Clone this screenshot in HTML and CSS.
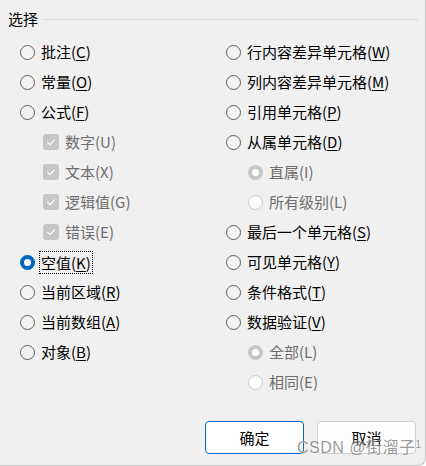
FILE: index.html
```html
<!DOCTYPE html>
<html lang="zh-CN">
<head>
<meta charset="utf-8">
<link rel="stylesheet" href="styles.css">
</head>
<body>
<div class="dialog">
  <div class="group-head">
    <span class="legend">选择</span>
    <span class="rule"></span>
  </div>
  <div class="columns">
    <div class="col col-left">
      <div class="row"><span class="radio"></span><span class="label">批注(<u>C</u>)</span></div>
      <div class="row"><span class="radio"></span><span class="label">常量(<u>O</u>)</span></div>
      <div class="row"><span class="radio"></span><span class="label">公式(<u>F</u>)</span></div>
      <div class="row sub-check"><span class="check"><svg viewBox="0 0 16 16" width="16" height="16"><path d="M4.6 8.3 L7 10.6 L11.5 5.8" fill="none" stroke="#fff" stroke-width="1.2" stroke-linecap="round" stroke-linejoin="round"/></svg></span><span class="label dis">数字(U)</span></div>
      <div class="row sub-check"><span class="check"><svg viewBox="0 0 16 16" width="16" height="16"><path d="M4.6 8.3 L7 10.6 L11.5 5.8" fill="none" stroke="#fff" stroke-width="1.2" stroke-linecap="round" stroke-linejoin="round"/></svg></span><span class="label dis">文本(X)</span></div>
      <div class="row sub-check"><span class="check"><svg viewBox="0 0 16 16" width="16" height="16"><path d="M4.6 8.3 L7 10.6 L11.5 5.8" fill="none" stroke="#fff" stroke-width="1.2" stroke-linecap="round" stroke-linejoin="round"/></svg></span><span class="label dis">逻辑值(G)</span></div>
      <div class="row sub-check"><span class="check"><svg viewBox="0 0 16 16" width="16" height="16"><path d="M4.6 8.3 L7 10.6 L11.5 5.8" fill="none" stroke="#fff" stroke-width="1.2" stroke-linecap="round" stroke-linejoin="round"/></svg></span><span class="label dis">错误(E)</span></div>
      <div class="row"><span class="radio on"></span><span class="label focus">空值(<u>K</u>)</span></div>
      <div class="row"><span class="radio"></span><span class="label">当前区域(<u>R</u>)</span></div>
      <div class="row"><span class="radio"></span><span class="label">当前数组(<u>A</u>)</span></div>
      <div class="row"><span class="radio"></span><span class="label">对象(<u>B</u>)</span></div>
    </div>
    <div class="col col-right">
      <div class="row"><span class="radio"></span><span class="label">行内容差异单元格(<u>W</u>)</span></div>
      <div class="row"><span class="radio"></span><span class="label">列内容差异单元格(<u>M</u>)</span></div>
      <div class="row"><span class="radio"></span><span class="label">引用单元格(<u>P</u>)</span></div>
      <div class="row"><span class="radio"></span><span class="label">从属单元格(<u>D</u>)</span></div>
      <div class="row sub-radio"><span class="radio dis-on"></span><span class="label dis">直属(I)</span></div>
      <div class="row sub-radio"><span class="radio dis-off"></span><span class="label dis">所有级别(L)</span></div>
      <div class="row"><span class="radio"></span><span class="label">最后一个单元格(<u>S</u>)</span></div>
      <div class="row"><span class="radio"></span><span class="label">可见单元格(<u>Y</u>)</span></div>
      <div class="row"><span class="radio"></span><span class="label">条件格式(<u>T</u>)</span></div>
      <div class="row"><span class="radio"></span><span class="label">数据验证(<u>V</u>)</span></div>
      <div class="row sub-radio"><span class="radio dis-on"></span><span class="label dis">全部(L)</span></div>
      <div class="row sub-radio"><span class="radio dis-off"></span><span class="label dis">相同(E)</span></div>
    </div>
  </div>
  <div class="buttons">
    <button class="btn primary">确定</button>
    <button class="btn">取消</button>
  </div>
  <div class="watermark">CSDN @街溜子<sup>1</sup></div>
</div>
</body>
</html>
```

FILE: styles.css
```css
html, body {
  margin: 0;
  padding: 0;
  background: #ffffff;
}
.dialog {
  position: relative;
  width: 425px;
  height: 465px;
  background: #f0f0f0;
  border-right: 1px solid #c4c4c4;
  border-bottom: 1px solid #c4c4c4;
  border-bottom-right-radius: 8px;
  font-family: "Noto Sans CJK SC", "Noto Sans", sans-serif;
  font-size: 15px;
  color: #000;
  overflow: hidden;
}
.group-head {
  display: flex;
  align-items: center;
  height: 20px;
  margin-top: 9px;
  padding-left: 8px;
  padding-right: 7px;
}
.legend {
  line-height: 20px;
}
.rule {
  flex: 1;
  height: 1px;
  background: #dadada;
  margin-left: 6px;
  margin-top: 1px;
}
.columns {
  display: flex;
  padding-left: 20px;
  margin-top: 8px;
}
.col-left {
  width: 206px;
}
.col {
  display: flex;
  flex-direction: column;
}
.row {
  display: flex;
  align-items: center;
  height: 30px;
}
.label {
  margin-left: 6px;
  line-height: 20px;
  white-space: nowrap;
}
.label u {
  text-decoration-thickness: 1px;
  text-underline-offset: 2px;
}
.label.dis {
  color: #6d6d6d;
}
.label.focus {
  outline: 1px dotted #000;
  outline-offset: 0;
  padding: 0 1px;
  margin-left: 5px;
  line-height: 21px;
}
.radio {
  box-sizing: border-box;
  width: 15px;
  height: 15px;
  border-radius: 50%;
  border: 1px solid #5e5e5e;
  background: #f3f3f3;
  flex: none;
}
.radio.on {
  border: 4px solid #0067c0;
  background: #ffffff;
}
.radio.dis-on {
  border: 4px solid #c6c6c6;
  background: #ffffff;
}
.radio.dis-off {
  border: 1px solid #cbcbcb;
  background: #fbfbfb;
}
.sub-check {
  padding-left: 23px;
}
.sub-radio {
  padding-left: 22px;
}
.check {
  width: 16px;
  height: 16px;
  border-radius: 3px;
  background: #c6c6c6;
  flex: none;
  display: flex;
}
.buttons {
  display: flex;
  justify-content: flex-end;
  gap: 13px;
  padding-right: 9px;
  margin-top: 24px;
}
.btn {
  box-sizing: border-box;
  width: 99px;
  height: 33px;
  border: 1px solid #d0d0d0;
  border-radius: 4px;
  background: #fdfdfd;
  font-family: inherit;
  font-size: 15px;
  color: #000;
  padding: 0;
}
.btn.primary {
  border-color: #0067c0;
  background: #ffffff;
}
.watermark {
  position: absolute;
  left: 297px;
  top: 434px;
  font-family: "Liberation Sans", Arial, "Noto Sans CJK SC", sans-serif;
  font-size: 16px;
  line-height: 22px;
  color: rgba(120, 120, 120, 0.75);
  text-shadow: 0 0 2px rgba(255,255,255,0.8);
  white-space: nowrap;
  letter-spacing: 0.5px;
}
.watermark sup {
  font-size: 10px;
  vertical-align: 5px;
}
```
